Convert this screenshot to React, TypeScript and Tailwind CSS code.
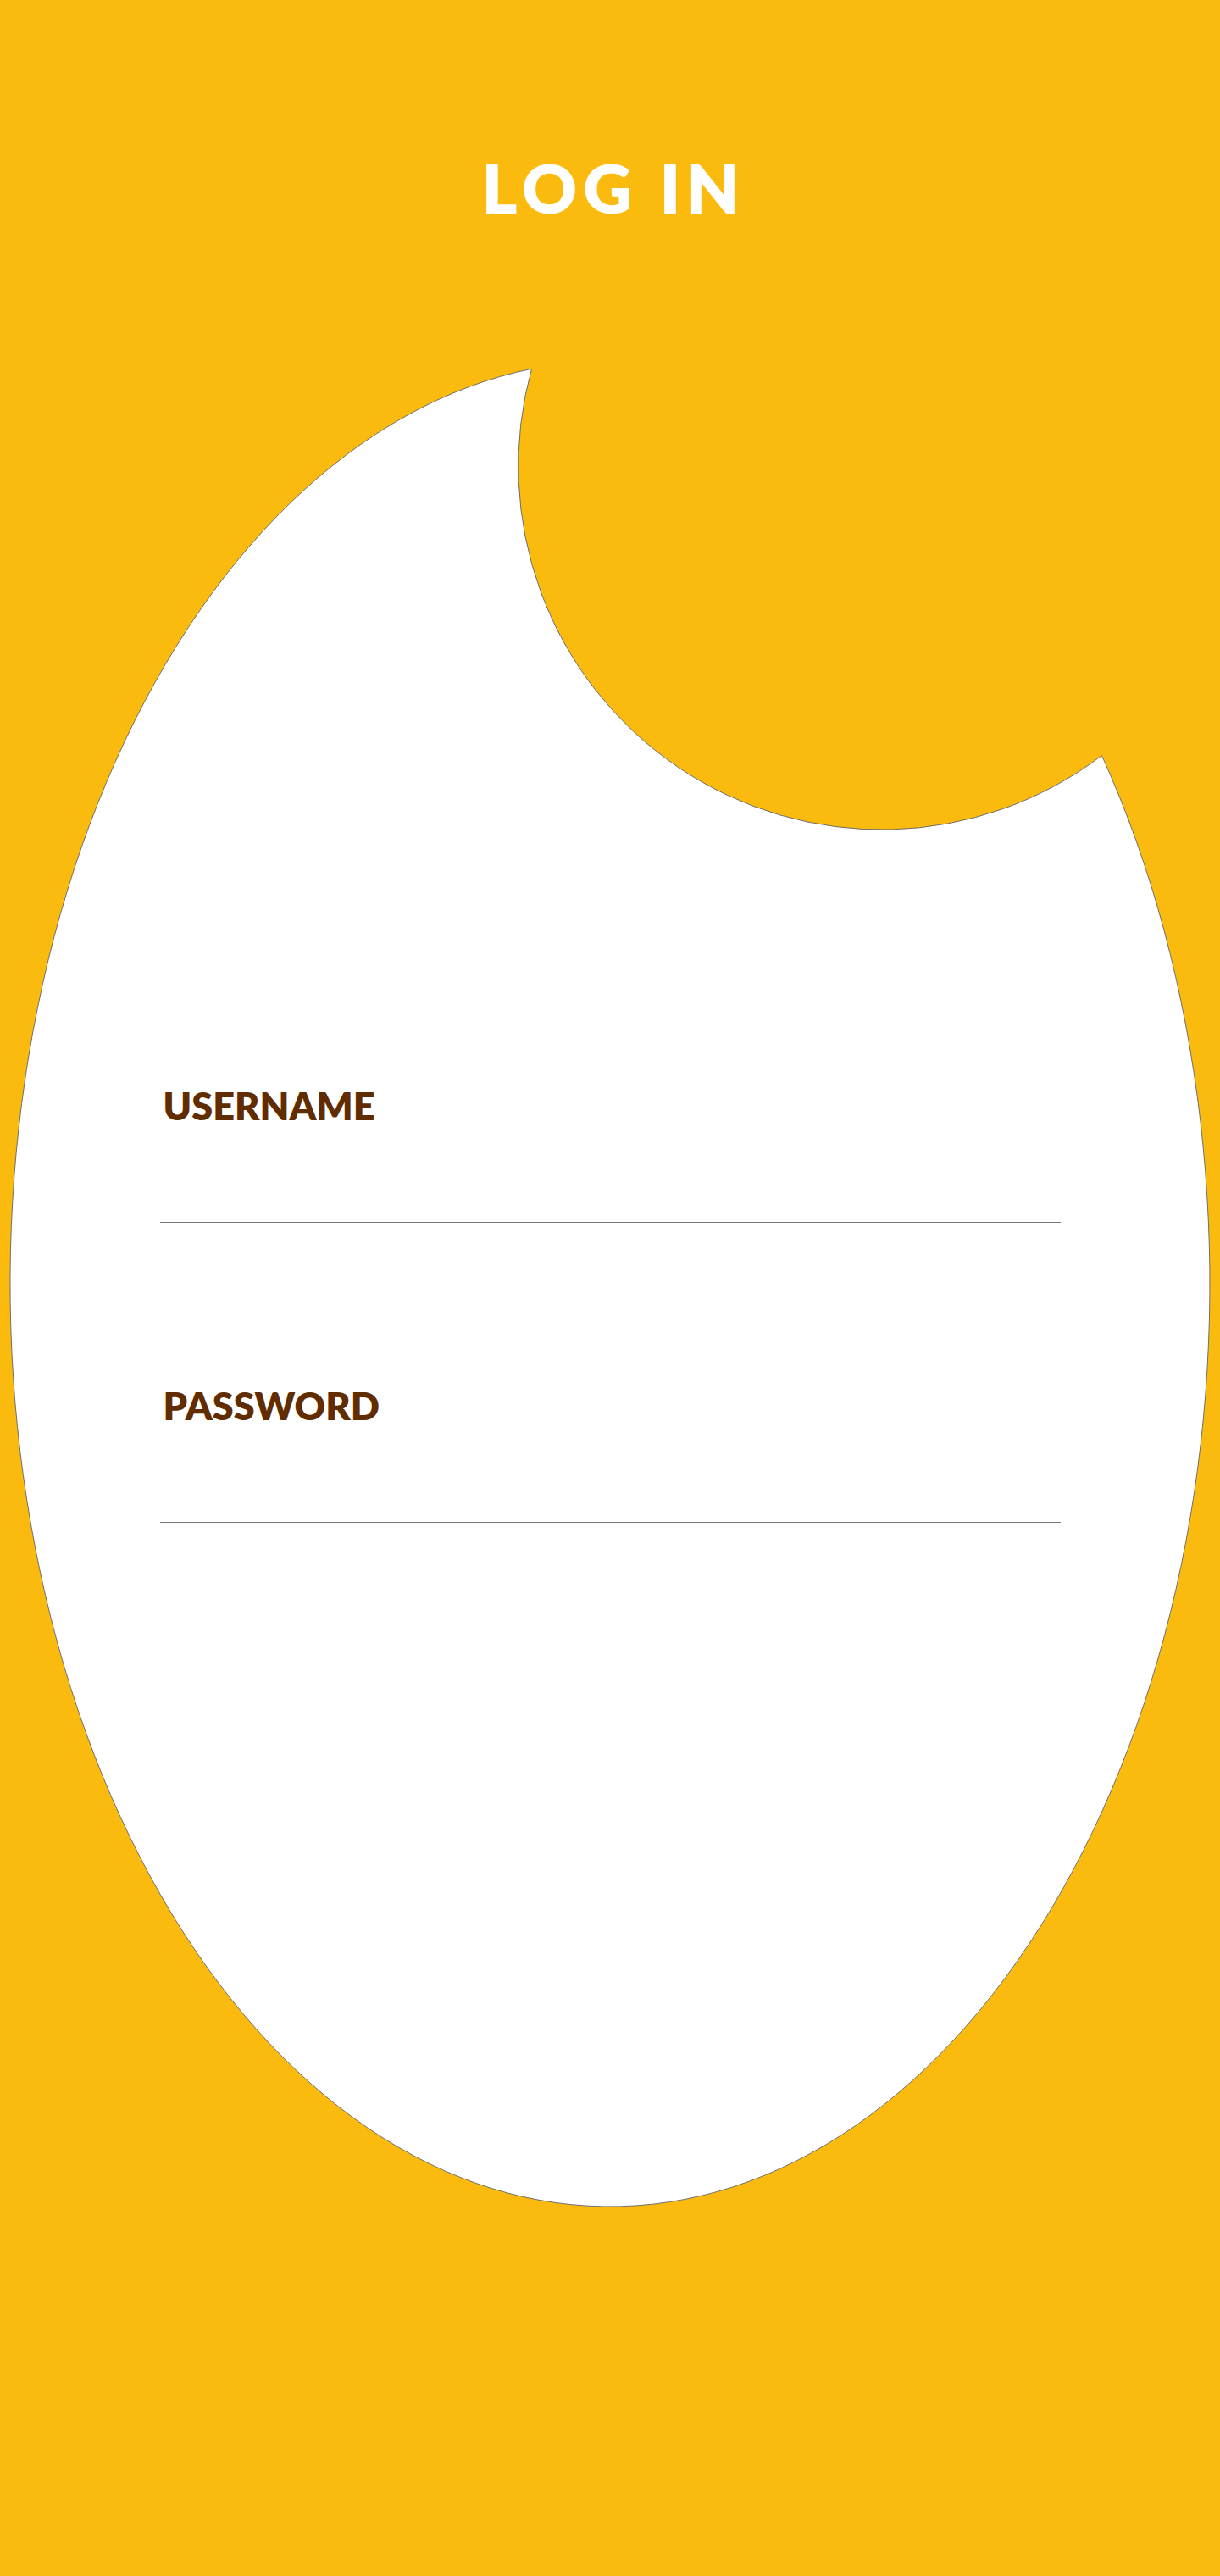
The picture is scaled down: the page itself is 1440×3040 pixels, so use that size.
import React from "react";

const YELLOW = "#fbba0e";

function Backdrop() {
  return (
    <svg
      className="absolute inset-0 h-full w-full"
      viewBox="0 0 1440 3040"
      preserveAspectRatio="none"
      aria-hidden="true"
    >
      <path
        d="M 627.5 435.3 A 708 1089 0 1 0 1300.5 891.6 A 429 429 0 0 1 627.5 435.3 Z"
        fill="#ffffff"
        stroke="#6f6f6f"
        strokeWidth="1"
      />
    </svg>
  );
}

function Field({ label, type }: { label: string; type: string }) {
  return (
    <label className="flex flex-col">
      <span className="block pl-[4px] text-[45px] font-extrabold leading-[46px] tracking-[0px] text-[#612d00]">
        {label}
      </span>
      <input
        type={type}
        className="mt-[69px] h-[46px] w-full border-0 border-b border-[#777777] bg-transparent text-[32px] outline-none"
      />
    </label>
  );
}

export default function App() {
  return (
    <div
      className="relative h-[3040px] w-[1440px] overflow-hidden"
      style={{ backgroundColor: YELLOW, fontFamily: 'Lato, "Open Sans", Arial, sans-serif' }}
    >
      <Backdrop />
      <div className="relative flex flex-col items-center">
        <h1 className="mt-[181px] pl-[8px] text-[80px] font-extrabold leading-[80px] tracking-[7px] text-white">
          LOG IN
        </h1>
        <form className="mt-[1021px] flex w-[1063px] flex-col gap-[193px]">
          <Field label="USERNAME" type="text" />
          <Field label="PASSWORD" type="password" />
        </form>
      </div>
    </div>
  );
}
